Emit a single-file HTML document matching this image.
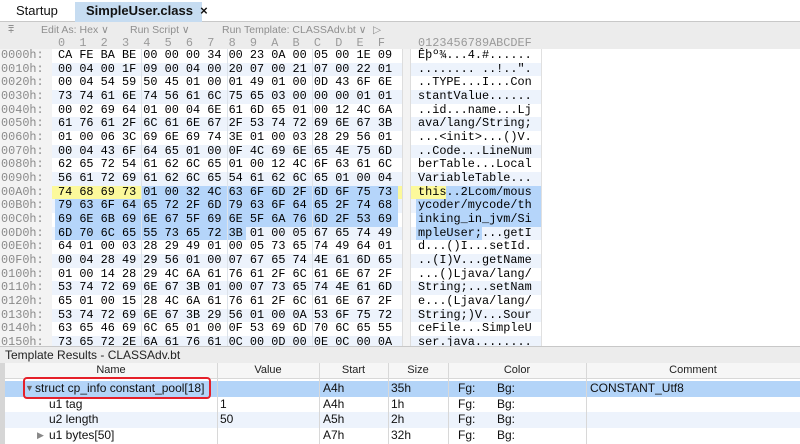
<!DOCTYPE html>
<html><head><meta charset="utf-8"><style>
*{margin:0;padding:0;box-sizing:border-box}
body{width:800px;height:444px;overflow:hidden;background:#fff;font-family:"Liberation Sans",sans-serif;position:relative}
.abs{position:absolute}
.mono{font-family:"Liberation Mono",monospace;font-size:11.85px;white-space:pre}
.row{position:absolute;height:13.67px;line-height:13.67px}
.off{left:0;width:52px;color:#8a8a8a;padding-left:1px}
.hx{left:52px;width:350px}
.as{left:411px;width:130px}
.alt{background:#edf3fc}
.y{background:#fcf99b}
.b{background:#b5d5fa;position:absolute;top:0;height:13.67px}
.t{position:absolute;top:0}
.tb{font-size:10.5px;color:#8f8f8f;top:24px}
.th{position:absolute;top:363px;height:15px;font-size:11px;color:#222;text-align:center;line-height:15px}
.tr{position:absolute;left:5px;width:795px;height:15.5px;font-size:12px;line-height:15.5px;color:#111}
.tr span{position:absolute}
.vl{position:absolute;top:363px;height:81px;width:1px;background:#d8d8d8}
</style></head><body>
<div class="abs" style="left:0;top:0;width:800px;height:22px;background:#fff;border-bottom:1px solid #c8c8c8"></div>
<div class="abs" style="left:16px;top:3px;font-size:13px;color:#111">Startup</div>
<div class="abs" style="left:75px;top:2px;width:127px;height:20px;background:#c6dcf1"></div>
<div class="abs" style="left:86px;top:3px;font-size:13px;font-weight:bold;color:#111">SimpleUser.class&nbsp;&nbsp;×</div>
<div class="abs" style="left:0;top:22px;width:800px;height:27px;background:#ececec"></div>
<div class="abs tb" style="left:8px">⩱</div>
<div class="abs tb" style="left:41px">Edit As: Hex ∨</div>
<div class="abs tb" style="left:130px">Run Script ∨</div>
<div class="abs tb" style="left:222px">Run Template: CLASSAdv.bt ∨</div>
<div class="abs tb" style="left:373px">▷</div>
<div class="abs mono" style="left:58px;top:37px;color:#9a9a9a;line-height:13px">0  1  2  3  4  5  6  7  8  9  A  B  C  D  E  F</div>
<div class="abs mono" style="left:418px;top:37px;color:#9a9a9a;line-height:13px">0123456789ABCDEF</div>
<div class="abs" style="left:0;top:49px;width:52px;height:300px;background:#f3f3f3"></div>
<div class="abs" style="left:402px;top:49px;width:9px;height:300px;background:#f3f3f3;border-left:1px solid #ddd;border-right:1px solid #ddd"></div>
<div class="abs" style="left:541px;top:49px;width:1px;height:300px;background:#e0e0e0"></div>

<div class="mono">
<div class="row off" style="top:49px">0000h:</div><div class="row hx" style="top:49px"><span class="t" style="left:6px">CA FE BA BE 00 00 00 34 00 23 0A 00 05 00 1E 09</span></div><div class="row as" style="top:49px"><span class="t" style="left:7px">Êþº¾...4.#......</span></div>
<div class="row off" style="top:62.67px">0010h:</div><div class="row hx alt" style="top:62.67px"><span class="t" style="left:6px">00 04 00 1F 09 00 04 00 20 07 00 21 07 00 22 01</span></div><div class="row as alt" style="top:62.67px"><span class="t" style="left:7px">........ ..!..".</span></div>
<div class="row off" style="top:76.34px">0020h:</div><div class="row hx" style="top:76.34px"><span class="t" style="left:6px">00 04 54 59 50 45 01 00 01 49 01 00 0D 43 6F 6E</span></div><div class="row as" style="top:76.34px"><span class="t" style="left:7px">..TYPE...I...Con</span></div>
<div class="row off" style="top:90px">0030h:</div><div class="row hx alt" style="top:90px"><span class="t" style="left:6px">73 74 61 6E 74 56 61 6C 75 65 03 00 00 00 01 01</span></div><div class="row as alt" style="top:90px"><span class="t" style="left:7px">stantValue......</span></div>
<div class="row off" style="top:103.67px">0040h:</div><div class="row hx" style="top:103.67px"><span class="t" style="left:6px">00 02 69 64 01 00 04 6E 61 6D 65 01 00 12 4C 6A</span></div><div class="row as" style="top:103.67px"><span class="t" style="left:7px">..id...name...Lj</span></div>
<div class="row off" style="top:117.34px">0050h:</div><div class="row hx alt" style="top:117.34px"><span class="t" style="left:6px">61 76 61 2F 6C 61 6E 67 2F 53 74 72 69 6E 67 3B</span></div><div class="row as alt" style="top:117.34px"><span class="t" style="left:7px">ava/lang/String;</span></div>
<div class="row off" style="top:131px">0060h:</div><div class="row hx" style="top:131px"><span class="t" style="left:6px">01 00 06 3C 69 6E 69 74 3E 01 00 03 28 29 56 01</span></div><div class="row as" style="top:131px"><span class="t" style="left:7px">...&lt;init&gt;...()V.</span></div>
<div class="row off" style="top:144.67px">0070h:</div><div class="row hx alt" style="top:144.67px"><span class="t" style="left:6px">00 04 43 6F 64 65 01 00 0F 4C 69 6E 65 4E 75 6D</span></div><div class="row as alt" style="top:144.67px"><span class="t" style="left:7px">..Code...LineNum</span></div>
<div class="row off" style="top:158.34px">0080h:</div><div class="row hx" style="top:158.34px"><span class="t" style="left:6px">62 65 72 54 61 62 6C 65 01 00 12 4C 6F 63 61 6C</span></div><div class="row as" style="top:158.34px"><span class="t" style="left:7px">berTable...Local</span></div>
<div class="row off" style="top:172px">0090h:</div><div class="row hx alt" style="top:172px"><span class="t" style="left:6px">56 61 72 69 61 62 6C 65 54 61 62 6C 65 01 00 04</span></div><div class="row as alt" style="top:172px"><span class="t" style="left:7px">VariableTable...</span></div>
<div class="row off" style="top:185.67px">00A0h:</div><div class="row hx y" style="top:185.67px"><div class="b" style="left:89px;width:257px"></div><span class="t" style="left:6px">74 68 69 73 01 00 32 4C 63 6F 6D 2F 6D 6F 75 73</span></div><div class="row as y" style="top:185.67px"><div class="b" style="left:35px;width:95px"></div><span class="t" style="left:7px">this..2Lcom/mous</span></div>
<div class="row off" style="top:199.34px">00B0h:</div><div class="row hx alt" style="top:199.34px"><div class="b" style="left:3px;width:343px"></div><span class="t" style="left:6px">79 63 6F 64 65 72 2F 6D 79 63 6F 64 65 2F 74 68</span></div><div class="row as alt" style="top:199.34px"><div class="b" style="left:5px;width:125px"></div><span class="t" style="left:7px">ycoder/mycode/th</span></div>
<div class="row off" style="top:213px">00C0h:</div><div class="row hx" style="top:213px"><div class="b" style="left:3px;width:343px"></div><span class="t" style="left:6px">69 6E 6B 69 6E 67 5F 69 6E 5F 6A 76 6D 2F 53 69</span></div><div class="row as" style="top:213px"><div class="b" style="left:5px;width:125px"></div><span class="t" style="left:7px">inking_in_jvm/Si</span></div>
<div class="row off" style="top:226.67px">00D0h:</div><div class="row hx alt" style="top:226.67px"><div class="b" style="left:3px;width:191px"></div><span class="t" style="left:6px">6D 70 6C 65 55 73 65 72 3B 01 00 05 67 65 74 49</span></div><div class="row as alt" style="top:226.67px"><div class="b" style="left:5px;width:66px"></div><span class="t" style="left:7px">mpleUser;...getI</span></div>
<div class="row off" style="top:240.34px">00E0h:</div><div class="row hx" style="top:240.34px"><span class="t" style="left:6px">64 01 00 03 28 29 49 01 00 05 73 65 74 49 64 01</span></div><div class="row as" style="top:240.34px"><span class="t" style="left:7px">d...()I...setId.</span></div>
<div class="row off" style="top:254px">00F0h:</div><div class="row hx alt" style="top:254px"><span class="t" style="left:6px">00 04 28 49 29 56 01 00 07 67 65 74 4E 61 6D 65</span></div><div class="row as alt" style="top:254px"><span class="t" style="left:7px">..(I)V...getName</span></div>
<div class="row off" style="top:267.67px">0100h:</div><div class="row hx" style="top:267.67px"><span class="t" style="left:6px">01 00 14 28 29 4C 6A 61 76 61 2F 6C 61 6E 67 2F</span></div><div class="row as" style="top:267.67px"><span class="t" style="left:7px">...()Ljava/lang/</span></div>
<div class="row off" style="top:281.34px">0110h:</div><div class="row hx alt" style="top:281.34px"><span class="t" style="left:6px">53 74 72 69 6E 67 3B 01 00 07 73 65 74 4E 61 6D</span></div><div class="row as alt" style="top:281.34px"><span class="t" style="left:7px">String;...setNam</span></div>
<div class="row off" style="top:295px">0120h:</div><div class="row hx" style="top:295px"><span class="t" style="left:6px">65 01 00 15 28 4C 6A 61 76 61 2F 6C 61 6E 67 2F</span></div><div class="row as" style="top:295px"><span class="t" style="left:7px">e...(Ljava/lang/</span></div>
<div class="row off" style="top:308.67px">0130h:</div><div class="row hx alt" style="top:308.67px"><span class="t" style="left:6px">53 74 72 69 6E 67 3B 29 56 01 00 0A 53 6F 75 72</span></div><div class="row as alt" style="top:308.67px"><span class="t" style="left:7px">String;)V...Sour</span></div>
<div class="row off" style="top:322.34px">0140h:</div><div class="row hx" style="top:322.34px"><span class="t" style="left:6px">63 65 46 69 6C 65 01 00 0F 53 69 6D 70 6C 65 55</span></div><div class="row as" style="top:322.34px"><span class="t" style="left:7px">ceFile...SimpleU</span></div>
<div class="row off" style="top:336px">0150h:</div><div class="row hx alt" style="top:336px"><span class="t" style="left:6px">73 65 72 2E 6A 61 76 61 0C 00 0D 00 0E 0C 00 0A</span></div><div class="row as alt" style="top:336px"><span class="t" style="left:7px">ser.java........</span></div>
</div>
<div class="abs" style="left:141px;top:49px;width:1px;height:300px;background:#dde3ea"></div>
<div class="abs" style="left:227px;top:49px;width:1px;height:300px;background:#dde3ea"></div>
<div class="abs" style="left:312px;top:49px;width:1px;height:300px;background:#dde3ea"></div>

<div class="abs" style="left:0;top:346px;width:800px;height:98px;background:#ececec;border-top:1px solid #c8c8c8"></div>
<div class="abs" style="left:5px;top:348px;font-size:12px;color:#222">Template Results - CLASSAdv.bt</div>
<div class="abs" style="left:5px;top:363px;width:795px;height:81px;background:#fff"></div>
<div class="abs" style="left:5px;top:363px;width:795px;height:16px;background:#f6f6f6;border-bottom:1px solid #d8d8d8"></div>
<div class="th" style="left:5px;width:212px">Name</div>
<div class="th" style="left:217px;width:102px">Value</div>
<div class="th" style="left:319px;width:69px">Start</div>
<div class="th" style="left:388px;width:60px">Size</div>
<div class="th" style="left:448px;width:138px">Color</div>
<div class="th" style="left:586px;width:214px">Comment</div>
<div class="tr" style="top:381px;background:#b3d4f8"><span style="left:20px;font-size:9px;color:#666">▼</span><span style="left:30px">struct cp_info constant_pool[18]</span></div>
<div class="tr" style="top:396.5px"><span style="left:44px">u1 tag</span></div>
<div class="tr" style="top:412px;background:#edf3fc"><span style="left:44px">u2 length</span></div>
<div class="tr" style="top:427.5px"><span style="left:32px;font-size:9px;color:#888">▶</span><span style="left:44px">u1 bytes[50]</span></div>
<div class="abs" style="left:0;top:381px;width:800px;height:63px;font-size:12px;color:#111;line-height:15.5px">
<div class="abs" style="left:323px;top:0">A4h</div><div class="abs" style="left:391px;top:0">35h</div><div class="abs" style="left:458px;top:0">Fg:</div><div class="abs" style="left:497px;top:0">Bg:</div><div class="abs" style="left:590px;top:0">CONSTANT_Utf8</div>
<div class="abs" style="left:220px;top:15.5px">1</div><div class="abs" style="left:323px;top:15.5px">A4h</div><div class="abs" style="left:391px;top:15.5px">1h</div><div class="abs" style="left:458px;top:15.5px">Fg:</div><div class="abs" style="left:497px;top:15.5px">Bg:</div>
<div class="abs" style="left:220px;top:31px">50</div><div class="abs" style="left:323px;top:31px">A5h</div><div class="abs" style="left:391px;top:31px">2h</div><div class="abs" style="left:458px;top:31px">Fg:</div><div class="abs" style="left:497px;top:31px">Bg:</div>
<div class="abs" style="left:323px;top:46.5px">A7h</div><div class="abs" style="left:391px;top:46.5px">32h</div><div class="abs" style="left:458px;top:46.5px">Fg:</div><div class="abs" style="left:497px;top:46.5px">Bg:</div>
</div>
<div class="vl" style="left:217px"></div><div class="vl" style="left:319px"></div><div class="vl" style="left:388px"></div><div class="vl" style="left:448px"></div><div class="vl" style="left:586px"></div>
<div class="abs" style="left:0;top:363px;width:5px;height:81px;background:#d6d6d6"></div>
<div class="abs" style="left:23px;top:377px;width:188px;height:22px;border:2px solid #e5202a;border-radius:4px"></div>
</body></html>
